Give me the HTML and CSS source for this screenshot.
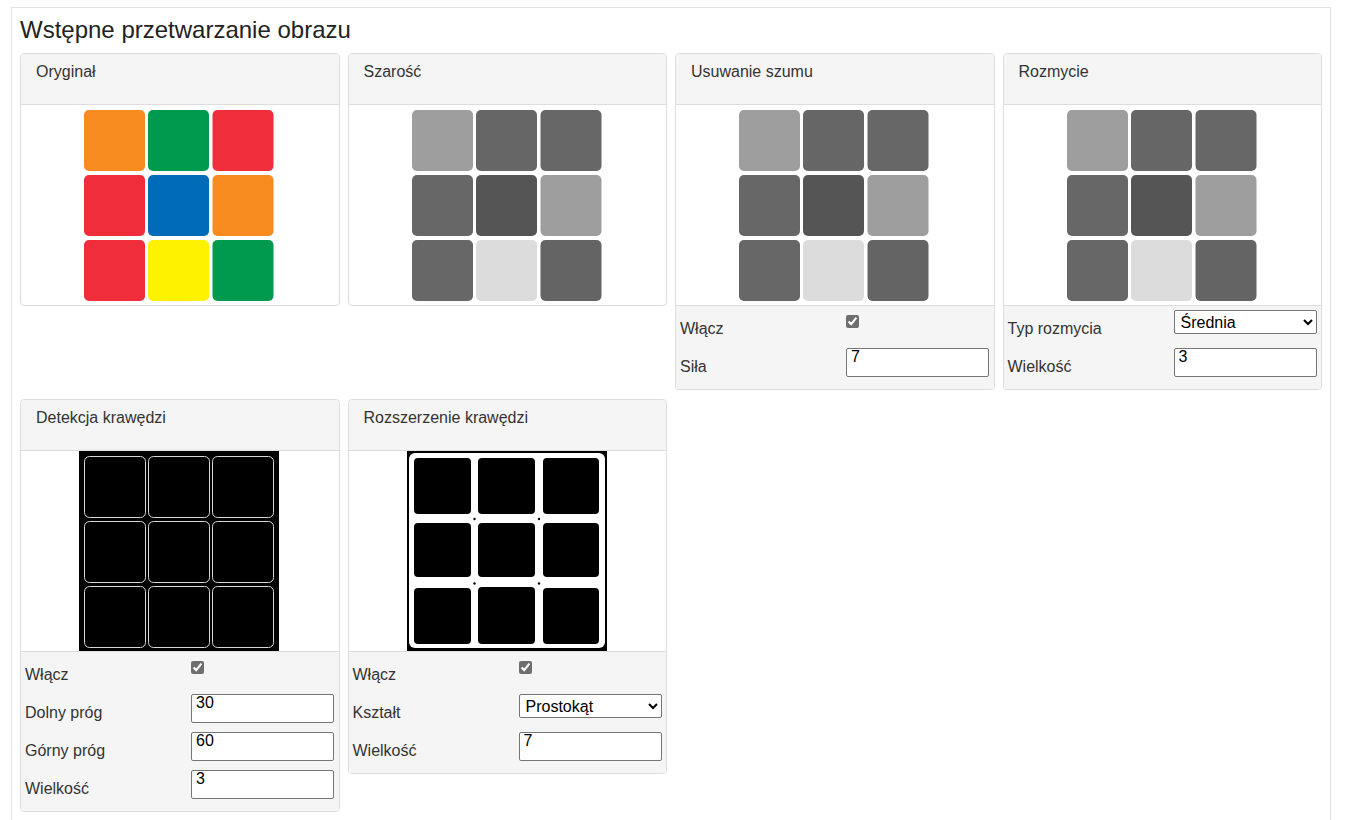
FILE: index.html
```html
<!DOCTYPE html>
<html lang="pl">
<head>
<meta charset="utf-8">
<title>Wstępne przetwarzanie obrazu</title>
<link rel="stylesheet" href="styles.css">
</head>
<body>
<div class="page">
  <h3 class="title">Wstępne przetwarzanie obrazu</h3>
  <div class="grid">
    <!-- Oryginał -->
    <div class="card">
      <div class="card-head">Oryginał</div>
      <div class="card-body">
        <svg width="200" height="200" viewBox="0 0 200 200">
          <rect x="5" y="5" width="61" height="61" rx="5" fill="#f78b1f"/>
          <rect x="69" y="5" width="61" height="61" rx="5" fill="#009a4e"/>
          <rect x="133.5" y="5" width="61" height="61" rx="5" fill="#f02d3a"/>
          <rect x="5" y="70" width="61" height="61" rx="5" fill="#f02d3a"/>
          <rect x="69" y="70" width="61" height="61" rx="5" fill="#006bb8"/>
          <rect x="133.5" y="70" width="61" height="61" rx="5" fill="#f78b1f"/>
          <rect x="5" y="135" width="61" height="61" rx="5" fill="#f02d3a"/>
          <rect x="69" y="135" width="61" height="61" rx="5" fill="#fff200"/>
          <rect x="133.5" y="135" width="61" height="61" rx="5" fill="#009a4e"/>
        </svg>
      </div>
    </div>
    <!-- Szarość -->
    <div class="card">
      <div class="card-head">Szarość</div>
      <div class="card-body">
        <svg width="200" height="200" viewBox="0 0 200 200">
          <rect x="5" y="5" width="61" height="61" rx="5" fill="#9e9e9e"/>
          <rect x="69" y="5" width="61" height="61" rx="5" fill="#666666"/>
          <rect x="133.5" y="5" width="61" height="61" rx="5" fill="#676767"/>
          <rect x="5" y="70" width="61" height="61" rx="5" fill="#676767"/>
          <rect x="69" y="70" width="61" height="61" rx="5" fill="#555555"/>
          <rect x="133.5" y="70" width="61" height="61" rx="5" fill="#9e9e9e"/>
          <rect x="5" y="135" width="61" height="61" rx="5" fill="#676767"/>
          <rect x="69" y="135" width="61" height="61" rx="5" fill="#dcdcdc"/>
          <rect x="133.5" y="135" width="61" height="61" rx="5" fill="#646464"/>
        </svg>
      </div>
    </div>
    <!-- Usuwanie szumu -->
    <div class="card">
      <div class="card-head">Usuwanie szumu</div>
      <div class="card-body">
        <svg width="200" height="200" viewBox="0 0 200 200">
          <rect x="5" y="5" width="61" height="61" rx="5" fill="#9e9e9e"/>
          <rect x="69" y="5" width="61" height="61" rx="5" fill="#666666"/>
          <rect x="133.5" y="5" width="61" height="61" rx="5" fill="#676767"/>
          <rect x="5" y="70" width="61" height="61" rx="5" fill="#676767"/>
          <rect x="69" y="70" width="61" height="61" rx="5" fill="#555555"/>
          <rect x="133.5" y="70" width="61" height="61" rx="5" fill="#9e9e9e"/>
          <rect x="5" y="135" width="61" height="61" rx="5" fill="#676767"/>
          <rect x="69" y="135" width="61" height="61" rx="5" fill="#dcdcdc"/>
          <rect x="133.5" y="135" width="61" height="61" rx="5" fill="#646464"/>
        </svg>
      </div>
      <div class="card-foot">
        <label class="lbl">Włącz</label>
        <div class="ctl"><input type="checkbox" class="chk" checked></div>
        <label class="lbl">Siła</label>
        <div class="ctl"><input type="text" class="txt" value="7"></div>
      </div>
    </div>
    <!-- Rozmycie -->
    <div class="card">
      <div class="card-head">Rozmycie</div>
      <div class="card-body">
        <svg class="blur" width="200" height="200" viewBox="0 0 200 200">
          <rect x="5" y="5" width="61" height="61" rx="5" fill="#9e9e9e"/>
          <rect x="69" y="5" width="61" height="61" rx="5" fill="#666666"/>
          <rect x="133.5" y="5" width="61" height="61" rx="5" fill="#676767"/>
          <rect x="5" y="70" width="61" height="61" rx="5" fill="#676767"/>
          <rect x="69" y="70" width="61" height="61" rx="5" fill="#555555"/>
          <rect x="133.5" y="70" width="61" height="61" rx="5" fill="#9e9e9e"/>
          <rect x="5" y="135" width="61" height="61" rx="5" fill="#676767"/>
          <rect x="69" y="135" width="61" height="61" rx="5" fill="#dcdcdc"/>
          <rect x="133.5" y="135" width="61" height="61" rx="5" fill="#646464"/>
        </svg>
      </div>
      <div class="card-foot">
        <label class="lbl">Typ rozmycia</label>
        <div class="ctl"><select class="sel"><option>Średnia</option><option>Gaussowskie</option><option>Medianowe</option></select></div>
        <label class="lbl">Wielkość</label>
        <div class="ctl"><input type="text" class="txt" value="3"></div>
      </div>
    </div>
    <!-- Detekcja krawędzi -->
    <div class="card">
      <div class="card-head">Detekcja krawędzi</div>
      <div class="card-body">
        <svg width="200" height="200" viewBox="0 0 200 200">
          <rect x="0" y="0" width="200" height="200" fill="#000"/>
          <g fill="none" stroke="#d8d8d8" stroke-width="1">
            <rect x="5.5" y="5.5" width="61" height="61" rx="5"/>
            <rect x="69.5" y="5.5" width="61" height="61" rx="5"/>
            <rect x="133.5" y="5.5" width="61" height="61" rx="5"/>
            <rect x="5.5" y="70.5" width="61" height="61" rx="5"/>
            <rect x="69.5" y="70.5" width="61" height="61" rx="5"/>
            <rect x="133.5" y="70.5" width="61" height="61" rx="5"/>
            <rect x="5.5" y="135.5" width="61" height="61" rx="5"/>
            <rect x="69.5" y="135.5" width="61" height="61" rx="5"/>
            <rect x="133.5" y="135.5" width="61" height="61" rx="5"/>
          </g>
        </svg>
      </div>
      <div class="card-foot">
        <label class="lbl">Włącz</label>
        <div class="ctl"><input type="checkbox" class="chk" checked></div>
        <label class="lbl">Dolny próg</label>
        <div class="ctl"><input type="text" class="txt" value="30"></div>
        <label class="lbl">Górny próg</label>
        <div class="ctl"><input type="text" class="txt" value="60"></div>
        <label class="lbl">Wielkość</label>
        <div class="ctl"><input type="text" class="txt" value="3"></div>
      </div>
    </div>
    <!-- Rozszerzenie krawędzi -->
    <div class="card">
      <div class="card-head">Rozszerzenie krawędzi</div>
      <div class="card-body">
        <svg width="200" height="200" viewBox="0 0 200 200">
          <rect x="0" y="0" width="200" height="200" fill="#000"/>
          <rect x="2" y="2" width="196" height="195" rx="6" fill="#fff"/>
          <g fill="#000">
            <rect x="7" y="7" width="57" height="56" rx="4"/>
            <rect x="71" y="7" width="57" height="56" rx="4"/>
            <rect x="136" y="7" width="56" height="56" rx="4"/>
            <rect x="7" y="72" width="57" height="54" rx="4"/>
            <rect x="71" y="72" width="57" height="54" rx="4"/>
            <rect x="136" y="72" width="56" height="54" rx="4"/>
            <rect x="7" y="137" width="57" height="56" rx="4"/>
            <rect x="71" y="136" width="57" height="57" rx="4"/>
            <rect x="136" y="137" width="56" height="56" rx="4"/>
            <circle cx="67.5" cy="68" r="1.2"/>
            <circle cx="132" cy="68" r="1.2"/>
            <circle cx="67.5" cy="132.5" r="1.2"/>
            <circle cx="132" cy="132.5" r="1.2"/>
          </g>
        </svg>
      </div>
      <div class="card-foot">
        <label class="lbl">Włącz</label>
        <div class="ctl"><input type="checkbox" class="chk" checked></div>
        <label class="lbl">Kształt</label>
        <div class="ctl"><select class="sel"><option>Prostokąt</option><option>Elipsa</option><option>Krzyż</option></select></div>
        <label class="lbl">Wielkość</label>
        <div class="ctl"><input type="text" class="txt" value="7"></div>
      </div>
    </div>
  </div>
</div>
</body>
</html>
```

FILE: styles.css
```css
* { box-sizing: border-box; }

html, body {
  margin: 0;
  padding: 0;
  background: #fff;
}

body {
  font-family: "Liberation Sans", Arial, sans-serif;
  font-size: 16px;
  color: #333;
}

.page {
  margin: 7px 14px 0 11px;
  border: 1px solid #e3e3e3;
  padding: 8px 8px 20px 8px;
}

.title {
  margin: 0 0 10px 0;
  font-size: 24px;
  line-height: 27px;
  font-weight: normal;
  color: #222;
}

.grid {
  display: grid;
  grid-template-columns: repeat(4, 1fr);
  column-gap: 8px;
  row-gap: 9px;
  align-items: start;
}

.card {
  border: 1px solid #ddd;
  border-radius: 4px;
  background: #fff;
  overflow: hidden;
}

.card-head {
  height: 51px;
  padding: 9px 15px 0 15px;
  line-height: 18px;
  background: #f5f5f5;
  border-bottom: 1px solid #ddd;
  color: #333;
}

.card-body {
  height: 200px;
  display: flex;
  justify-content: center;
  align-items: flex-start;
  padding-right: 1px;
}

.card-body svg { display: block; }

.blur { filter: blur(0.5px); }

.card-foot {
  background: #f5f5f5;
  border-top: 1px solid #ddd;
  display: grid;
  grid-template-columns: 166px 143px;
  grid-auto-rows: 38px;
  padding: 0 4px 7px 4px;
}

.lbl {
  padding-top: 14px;
  line-height: 18px;
  color: #333;
}

.ctl {
  display: flex;
  align-items: flex-start;
}

.chk {
  margin: 9px 0 0 0;
  width: 13px;
  height: 13px;
  accent-color: #6e6e6e;
}

.txt {
  margin-top: 4px;
  width: 143px;
  height: 29px;
  padding: 0 4px 11px 4px;
  border: 1px solid #767676;
  border-radius: 2px;
  font-family: "Liberation Sans", Arial, sans-serif;
  font-size: 16px;
  color: #000;
  background: #fff;
}

.sel {
  margin-top: 4px;
  width: 143px;
  height: 24px;
  border: 1px solid #767676;
  border-radius: 2px;
  font-family: "Liberation Sans", Arial, sans-serif;
  font-size: 16px;
  color: #000;
  background: #fff;
  padding: 0 0 0 2px;
}
```
